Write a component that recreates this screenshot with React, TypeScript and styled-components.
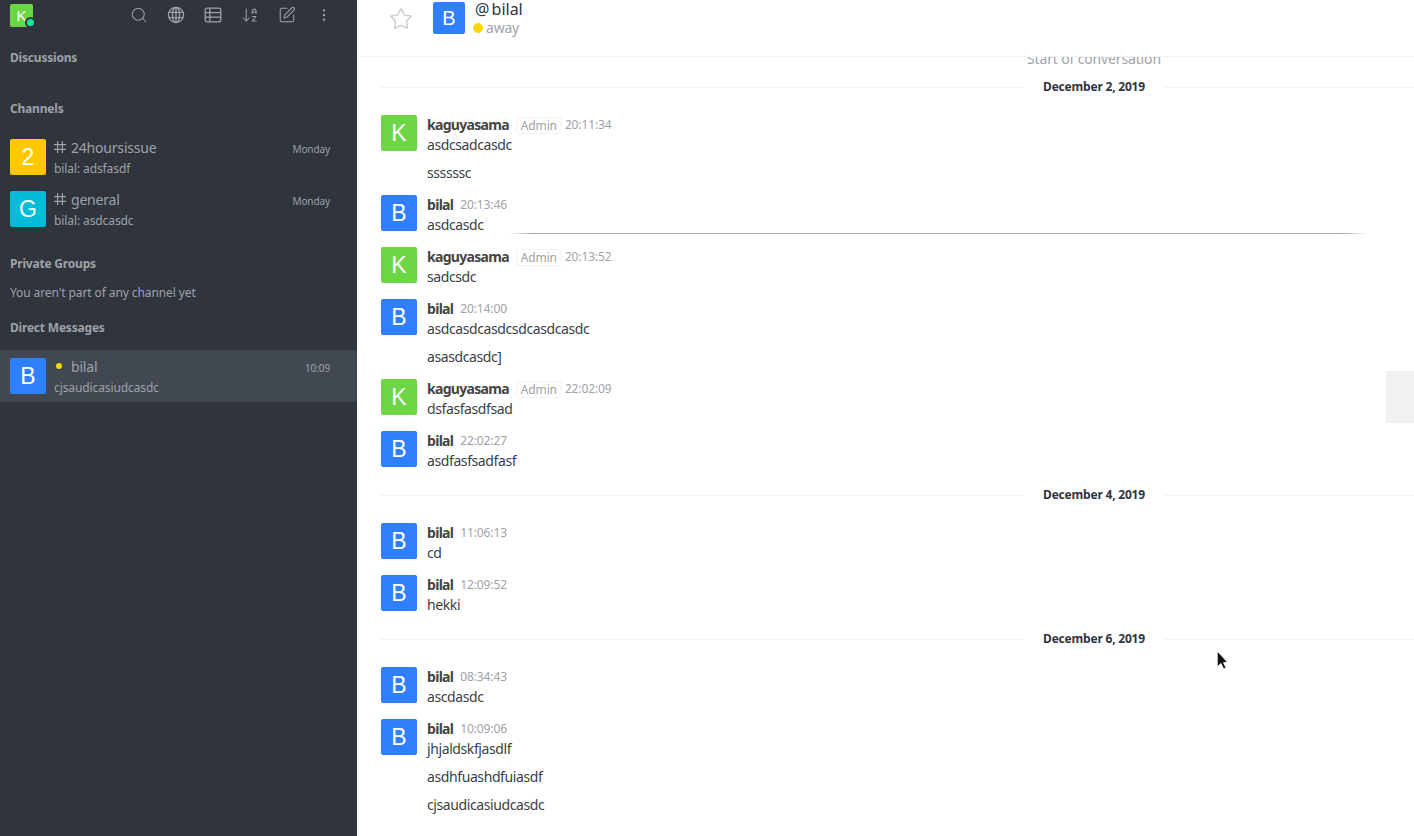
import React from "react";
import styled, { createGlobalStyle } from "styled-components";
import { Search, Star, ArrowDownAZ, SquarePen, MoreVertical } from "lucide-react";

const UI_FONT = `"Noto Sans", "Open Sans", sans-serif`;

const GlobalStyle = createGlobalStyle`
  html, body {
    margin: 0;
    height: 100%;
    overflow: hidden;
    background: #fff;
    font-family: ${UI_FONT};
  }
  #root { height: 100%; }
`;

const Page = styled.div`
  display: flex;
  width: 1414px;
  height: 836px;
  overflow: hidden;
  position: relative;
`;

const Sidebar = styled.aside`
  width: 357px;
  flex: none;
  background: #2f343d;
  color: #9ea2a8;
`;

const SideTop = styled.div`
  display: flex;
  align-items: center;
  justify-content: space-between;
  height: 30px;
  padding: 0 24px 0 10px;
`;

const IconBar = styled.div`
  display: flex;
  align-items: center;
  gap: 19px;
  color: #9ea2a8;
`;

const IconCell = styled.span`
  display: flex;
  width: 18px;
  height: 18px;
  align-items: center;
  justify-content: center;
`;

const Avatar = styled.div<{ $bg: string; $size?: number }>`
  width: ${(p) => p.$size ?? 36}px;
  height: ${(p) => p.$size ?? 36}px;
  flex: none;
  display: flex;
  align-items: center;
  justify-content: center;
  border-radius: 2px;
  background: ${(p) => p.$bg};
  color: #fff;
  font-family: "Liberation Sans", Arial, sans-serif;
  font-size: ${(p) => Math.round((p.$size ?? 36) * 0.64)}px;
  position: relative;
`;

const OnlineDot = styled.span`
  position: absolute;
  right: -3px;
  bottom: -1px;
  width: 7px;
  height: 7px;
  border-radius: 50%;
  background: #12e8a0;
  border: 2px solid #2f343d;
`;

const SectionTitle = styled.div<{ $top: number }>`
  margin-top: ${(p) => p.$top}px;
  padding-left: 10px;
  height: 18px;
  line-height: 18px;
  font-size: 12px;
  font-weight: 700;
  letter-spacing: -0.2px;
  color: #9ea2a8;
`;

const EmptyNote = styled.div`
  margin-top: 11px;
  padding-left: 10px;
  height: 18px;
  line-height: 18px;
  font-size: 12px;
  letter-spacing: -0.1px;
  color: #9ea2a8;
`;

const RoomRow = styled.div<{ $active?: boolean; $top?: number }>`
  display: flex;
  height: 36px;
  padding: 8px 27px 8px 10px;
  margin-top: ${(p) => p.$top ?? 0}px;
  gap: 8px;
  background: ${(p) => (p.$active ? "#414852" : "transparent")};
`;

const RoomBody = styled.div`
  flex: 1;
  min-width: 0;
`;

const RoomHead = styled.div`
  display: flex;
  align-items: center;
  height: 20px;
  margin-top: -2px;
  margin-bottom: 4px;
`;

const RoomGlyph = styled.span`
  width: 17px;
  flex: none;
  display: flex;
  align-items: center;
`;

const AwayDot = styled.span`
  width: 6px;
  height: 6px;
  margin-left: 2px;
  border-radius: 50%;
  background: #ffd700;
`;

const RoomName = styled.span`
  flex: 1;
  font-size: 14px;
  letter-spacing: -0.2px;
  color: #9ea2a8;
`;

const RoomTime = styled.span`
  margin-top: 3px;
  font-size: 10px;
  letter-spacing: -0.1px;
  color: #9ea2a8;
`;

const RoomLast = styled.div`
  font-size: 12px;
  line-height: 16px;
  letter-spacing: -0.1px;
  color: #9ea2a8;
`;

const Main = styled.main`
  flex: 1;
  min-width: 0;
  display: flex;
  flex-direction: column;
  overflow: hidden;
`;

const RoomHeader = styled.header`
  height: 54px;
  flex: none;
  display: flex;
  align-items: flex-start;
  padding: 2px 0 0 32px;
  gap: 20px;
  border-bottom: 1px solid #f2f3f5;
`;

const StarButton = styled.span`
  display: flex;
  margin-top: 5px;
  color: #cbced1;
`;

const HeaderInfo = styled.div`
  margin-left: -10px;
`;

const HeaderName = styled.div`
  margin-top: -1px;
  font-size: 16px;
  line-height: 16px;
  word-spacing: -2px;
  color: #2f343d;
`;

const HeaderStatus = styled.div`
  display: flex;
  align-items: center;
  gap: 3px;
  margin-top: 3px;
  margin-left: -2px;
  font-size: 14px;
  line-height: 16px;
  letter-spacing: -0.2px;
  color: #9ea2a8;
`;

const StatusDot = styled.span`
  width: 10px;
  height: 10px;
  border-radius: 50%;
  background: #ffd700;
`;

const Feed = styled.div`
  flex: 1;
  overflow: hidden;
  padding-left: 23px;
`;

const FeedInner = styled.div`
  width: 1428px;
  margin-top: -7px;
`;

const StartNote = styled.div`
  height: 18px;
  line-height: 18px;
  margin-bottom: 7px;
  text-align: center;
  font-size: 14px;
  letter-spacing: -0.15px;
  color: #9ea2a8;
`;

const DateRule = styled.div`
  display: flex;
  align-items: center;
  height: 24px;
  margin-bottom: 16px;
  font-size: 12px;
  font-weight: 700;
  letter-spacing: -0.2px;
  color: #2f343d;

  &::before,
  &::after {
    content: "";
    flex: 1;
    height: 1px;
    background: #f2f3f5;
  }
`;

const DateLabel = styled.span`
  width: 140px;
  margin-top: -2px;
  text-align: center;
`;

const MessageRow = styled.div`
  display: flex;
  gap: 10px;
  margin-bottom: 12px;
  padding-left: 1px;
`;

const MessageBody = styled.div`
  min-width: 0;
`;

const MessageHead = styled.div`
  display: flex;
  align-items: center;
  height: 20px;
  margin-top: -1px;
  margin-bottom: 1px;
`;

const Author = styled.span`
  font-size: 14px;
  font-weight: 700;
  letter-spacing: -0.7px;
  color: #444;
`;

const RoleBadge = styled.span`
  margin-left: 7px;
  padding: 0 4px;
  height: 15px;
  margin-top: 2px;
  line-height: 15px;
  border: 1px solid #f1f2f4;
  border-radius: 2px;
  font-size: 12px;
  letter-spacing: -0.15px;
  color: #9ea2a8;
`;

const Stamp = styled.span<{ $afterBadge: boolean }>`
  margin-left: ${(p) => (p.$afterBadge ? 3 : 7)}px;
  margin-top: 1px;
  font-size: 12px;
  letter-spacing: -0.12px;
  color: #9ea2a8;
`;

const MessageText = styled.div`
  font-size: 14px;
  line-height: 20px;
  letter-spacing: -0.4px;
  color: #3a3f47;

  & + & {
    margin-top: 8px;
  }
`;

const StrayLine = styled.div`
  position: absolute;
  left: 508px;
  top: 233px;
  width: 860px;
  height: 1px;
  background: linear-gradient(90deg, transparent, #a8a8a8 3%, #a8a8a8 97%, transparent);
`;

const ScrollThumb = styled.div`
  position: absolute;
  left: 1386px;
  top: 371px;
  width: 28px;
  height: 52px;
  background: #f1f2f0;
`;

const Pointer = styled.svg`
  position: absolute;
  left: 1216px;
  top: 650px;
`;

const HashIcon = () => (
  <svg width="12" height="12" viewBox="0 0 12 12" fill="none" stroke="currentColor" strokeWidth="1.2">
    <path d="M3.6 0v12M8.4 0v12M0 3.6h12M0 8.4h12" />
  </svg>
);

const GlobeIcon = () => (
  <svg width="18" height="18" viewBox="0 0 18 18" fill="none" stroke="currentColor" strokeWidth="1.3">
    <circle cx="9" cy="9" r="7.6" />
    <ellipse cx="9" cy="9" rx="3.6" ry="7.6" />
    <path d="M9 1.4v15.2M2 6.4h14M2 11.6h14" />
  </svg>
);

const TableIcon = () => (
  <svg width="18" height="18" viewBox="0 0 18 18" fill="none" stroke="currentColor" strokeWidth="1.3">
    <rect x="1.2" y="2.2" width="15.6" height="13.6" rx="2" />
    <path d="M1.2 6.6h15.6M1.2 11.2h15.6M5.8 2.2v13.6" />
  </svg>
);

const COLORS = { B: "#2f80ff", K: "#6dd644", G: "#00bcd8", "2": "#ffc800" };

type Msg = { who: "bilal" | "kaguyasama"; time: string; lines: string[] };

const Message = ({ who, time, lines }: Msg) => {
  const admin = who === "kaguyasama";
  return (
    <MessageRow>
      <Avatar $bg={admin ? COLORS.K : COLORS.B}>{admin ? "K" : "B"}</Avatar>
      <MessageBody>
        <MessageHead>
          <Author>{who}</Author>
          {admin && <RoleBadge>Admin</RoleBadge>}
          <Stamp $afterBadge={admin}>{time}</Stamp>
        </MessageHead>
        {lines.map((l) => (
          <MessageText key={l}>{l}</MessageText>
        ))}
      </MessageBody>
    </MessageRow>
  );
};

const groups: { date: string; messages: Msg[] }[] = [
  {
    date: "December 2, 2019",
    messages: [
      { who: "kaguyasama", time: "20:11:34", lines: ["asdcsadcasdc", "ssssssc"] },
      { who: "bilal", time: "20:13:46", lines: ["asdcasdc"] },
      { who: "kaguyasama", time: "20:13:52", lines: ["sadcsdc"] },
      { who: "bilal", time: "20:14:00", lines: ["asdcasdcasdcsdcasdcasdc", "asasdcasdc]"] },
      { who: "kaguyasama", time: "22:02:09", lines: ["dsfasfasdfsad"] },
      { who: "bilal", time: "22:02:27", lines: ["asdfasfsadfasf"] },
    ],
  },
  {
    date: "December 4, 2019",
    messages: [
      { who: "bilal", time: "11:06:13", lines: ["cd"] },
      { who: "bilal", time: "12:09:52", lines: ["hekki"] },
    ],
  },
  {
    date: "December 6, 2019",
    messages: [
      { who: "bilal", time: "08:34:43", lines: ["ascdasdc"] },
      { who: "bilal", time: "10:09:06", lines: ["jhjaldskfjasdlf", "asdhfuashdfuiasdf", "cjsaudicasiudcasdc"] },
    ],
  },
];

export default function App() {
  return (
    <Page>
      <GlobalStyle />
      <Sidebar>
        <SideTop>
          <Avatar $bg={COLORS.K} $size={23}>
            K
            <OnlineDot />
          </Avatar>
          <IconBar>
            <IconCell><Search size={20} strokeWidth={1.4} /></IconCell>
            <IconCell><GlobeIcon /></IconCell>
            <IconCell><TableIcon /></IconCell>
            <IconCell><ArrowDownAZ size={18} strokeWidth={1.4} /></IconCell>
            <IconCell><SquarePen size={18} strokeWidth={1.4} /></IconCell>
            <IconCell><MoreVertical size={16} strokeWidth={1.6} /></IconCell>
          </IconBar>
        </SideTop>

        <SectionTitle $top={19}>Discussions</SectionTitle>
        <SectionTitle $top={33}>Channels</SectionTitle>

        <RoomRow $top={13}>
          <Avatar $bg={COLORS["2"]}>2</Avatar>
          <RoomBody>
            <RoomHead>
              <RoomGlyph><HashIcon /></RoomGlyph>
              <RoomName>24hoursissue</RoomName>
              <RoomTime>Monday</RoomTime>
            </RoomHead>
            <RoomLast>bilal: adsfasdf</RoomLast>
          </RoomBody>
        </RoomRow>
        <RoomRow>
          <Avatar $bg={COLORS.G}>G</Avatar>
          <RoomBody>
            <RoomHead>
              <RoomGlyph><HashIcon /></RoomGlyph>
              <RoomName>general</RoomName>
              <RoomTime>Monday</RoomTime>
            </RoomHead>
            <RoomLast>bilal: asdcasdc</RoomLast>
          </RoomBody>
        </RoomRow>

        <SectionTitle $top={20}>Private Groups</SectionTitle>
        <EmptyNote>You aren't part of any channel yet</EmptyNote>
        <SectionTitle $top={17}>Direct Messages</SectionTitle>

        <RoomRow $active $top={13}>
          <Avatar $bg={COLORS.B}>B</Avatar>
          <RoomBody>
            <RoomHead>
              <RoomGlyph><AwayDot /></RoomGlyph>
              <RoomName>bilal</RoomName>
              <RoomTime>10:09</RoomTime>
            </RoomHead>
            <RoomLast>cjsaudicasiudcasdc</RoomLast>
          </RoomBody>
        </RoomRow>
      </Sidebar>

      <Main>
        <RoomHeader>
          <StarButton><Star size={24} strokeWidth={1.5} /></StarButton>
          <Avatar $bg={COLORS.B} $size={32}>B</Avatar>
          <HeaderInfo>
            <HeaderName>@ bilal</HeaderName>
            <HeaderStatus>
              <StatusDot />
              away
            </HeaderStatus>
          </HeaderInfo>
        </RoomHeader>
        <Feed>
          <FeedInner>
            <StartNote>Start of conversation</StartNote>
            {groups.map((g) => (
              <React.Fragment key={g.date}>
                <DateRule>
                  <DateLabel>{g.date}</DateLabel>
                </DateRule>
                {g.messages.map((m) => (
                  <Message key={m.time} {...m} />
                ))}
              </React.Fragment>
            ))}
          </FeedInner>
        </Feed>
      </Main>

      <StrayLine />
      <ScrollThumb />
      <Pointer width="13" height="21" viewBox="0 0 12 20">
        <path d="M1 1v15l3.6-3.2 2.4 5.4 2.4-1-2.4-5.2H11z" fill="#111" stroke="#fff" strokeWidth="0.8" />
      </Pointer>
    </Page>
  );
}
